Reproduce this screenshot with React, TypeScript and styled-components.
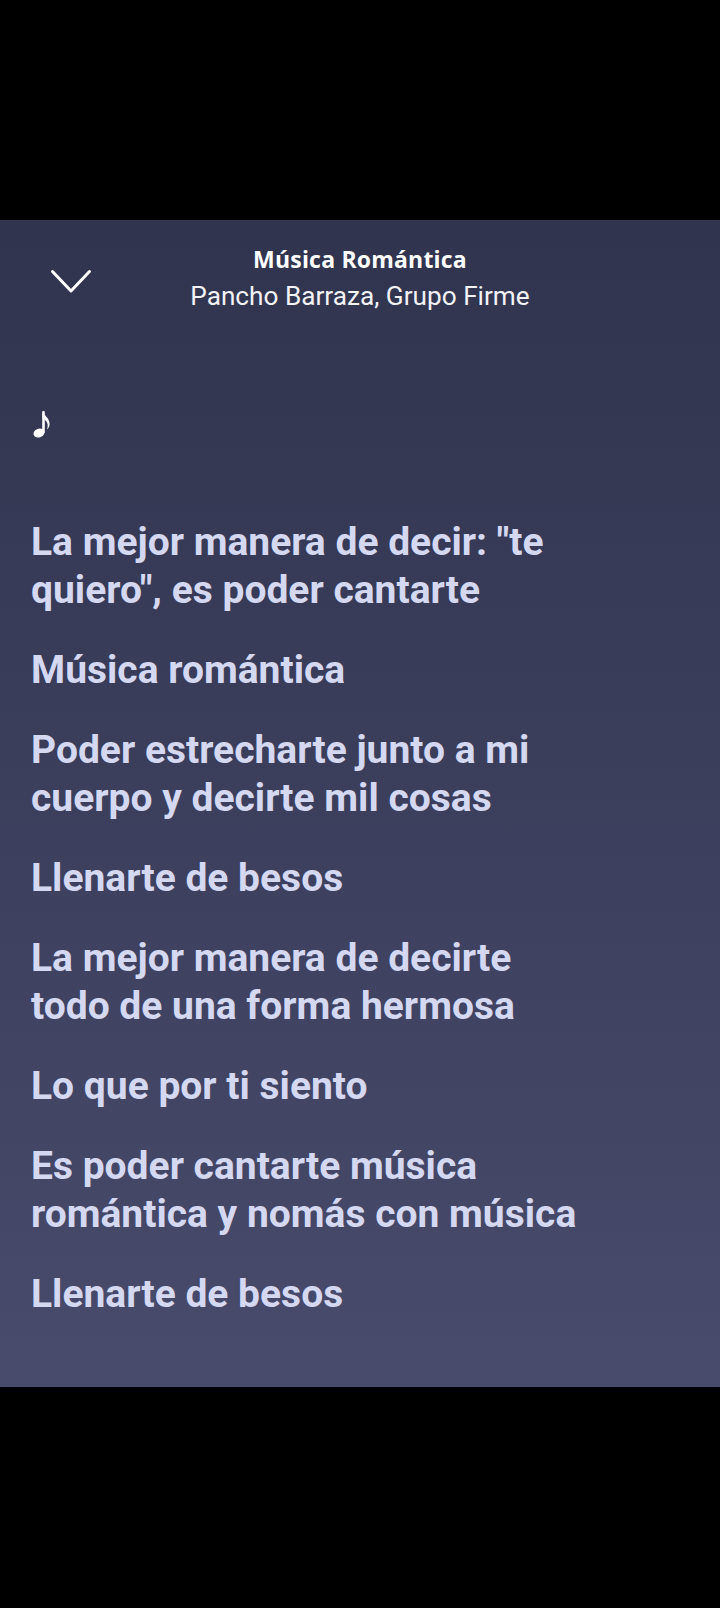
import React from "react";
import styled, { createGlobalStyle } from "styled-components";

const Global = createGlobalStyle`
  html, body { margin: 0; padding: 0; background: #000; }
  body { font-family: Roboto, "Noto Sans", sans-serif; }
`;

const Screen = styled.div`
  width: 720px;
  height: 1608px;
  background: #000;
  display: flex;
  flex-direction: column;
`;

const Bar = styled.div<{ $h: number }>`
  height: ${(p) => p.$h}px;
  flex: none;
`;

const Panel = styled.main`
  position: relative;
  height: 1167px;
  flex: none;
  overflow: hidden;
  background: linear-gradient(180deg, #30344e 0%, #3a3e5b 45%, #484b6b 100%);
`;

const Header = styled.header`
  display: grid;
  grid-template-columns: 1fr auto 1fr;
  align-items: center;
  padding-top: 26px;
`;

const Back = styled.button`
  justify-self: start;
  margin: 6px 0 0 50px;
  padding: 0;
  border: 0;
  background: none;
  display: flex;
  color: #fff;
`;

const Titles = styled.div`
  display: flex;
  flex-direction: column;
  align-items: center;
  text-align: center;
`;

const Title = styled.div`
  font-family: "Open Sans", Roboto, sans-serif;
  font-size: 23px;
  line-height: 26px;
  font-weight: 700;
  color: #fff;
  letter-spacing: 0.2px;
`;

const Subtitle = styled.div`
  margin-top: 9px;
  font-family: Roboto, "Open Sans", sans-serif;
  font-size: 26.2px;
  line-height: 30px;
  font-weight: 400;
  color: #f2f2f7;
  letter-spacing: 0;
`;

const Note = styled.div`
  margin: 99px 0 0 33px;
  width: 18px;
  height: 28px;
  display: flex;
`;

const Lyrics = styled.section`
  margin-top: 80px;
  padding: 0 31px;
  display: flex;
  flex-direction: column;
  gap: 32px;
`;

const Line = styled.p`
  margin: 0;
  white-space: nowrap;
  font-family: Roboto, "Noto Sans", sans-serif;
  font-size: 39px;
  line-height: 48px;
  font-weight: 700;
  letter-spacing: 0;
  color: #d5d8f1;
`;

const Fade = styled.div`
  position: absolute;
  left: 0;
  right: 0;
  bottom: 0;
  height: 80px;
  background: linear-gradient(180deg, rgba(72, 75, 107, 0) 0%, rgba(72, 75, 107, 0.85) 45%, #484b6b 65%);
  pointer-events: none;
`;

const lyrics = [
  ['La mejor manera de decir: "te', 'quiero", es poder cantarte'],
  ["Música romántica"],
  ["Poder estrecharte junto a mi", "cuerpo y decirte mil cosas"],
  ["Llenarte de besos"],
  ["La mejor manera de decirte", "todo de una forma hermosa"],
  ["Lo que por ti siento"],
  ["Es poder cantarte música", "romántica y nomás con música"],
  ["Llenarte de besos"],
  ["Pero ya no sé qué más decirte", "para hacerte feliz"],
  ["Música romántica"],
];

export default function App() {
  return (
    <>
      <Global />
      <Screen>
        <Bar $h={220} />
        <Panel>
          <Header>
            <Back aria-label="Cerrar">
              <svg width="42" height="25" viewBox="0 0 42 25" fill="none">
                <polyline
                  points="2.5,2.5 21,22 39.5,2.5"
                  stroke="#fff"
                  strokeWidth="3"
                  strokeLinecap="round"
                  strokeLinejoin="round"
                />
              </svg>
            </Back>
            <Titles>
              <Title>Música Romántica</Title>
              <Subtitle>Pancho Barraza, Grupo Firme</Subtitle>
            </Titles>
            <span />
          </Header>
          <Note>
            <svg width="18" height="28" viewBox="0 0 18 28" fill="#fff">
              <ellipse cx="6" cy="23" rx="5.6" ry="4.4" transform="rotate(-22 6 23)" />
              <rect x="9.2" y="1" width="2.6" height="22" rx="1" />
              <path d="M9.5 1 C10 5 17.5 8 16.5 15 C16.2 17 15 18.5 14 19.5 C15.2 16 15 13 13 11 C11.8 9.8 10.5 9 9.5 8.5 Z" />
            </svg>
          </Note>
          <Lyrics>
            {lyrics.map((block, i) => (
              <Line key={i}>
                {block.map((l, j) => (
                  <React.Fragment key={j}>
                    {l}
                    {j < block.length - 1 && <br />}
                  </React.Fragment>
                ))}
              </Line>
            ))}
          </Lyrics>
          <Fade />
        </Panel>
        <Bar $h={221} />
      </Screen>
    </>
  );
}
